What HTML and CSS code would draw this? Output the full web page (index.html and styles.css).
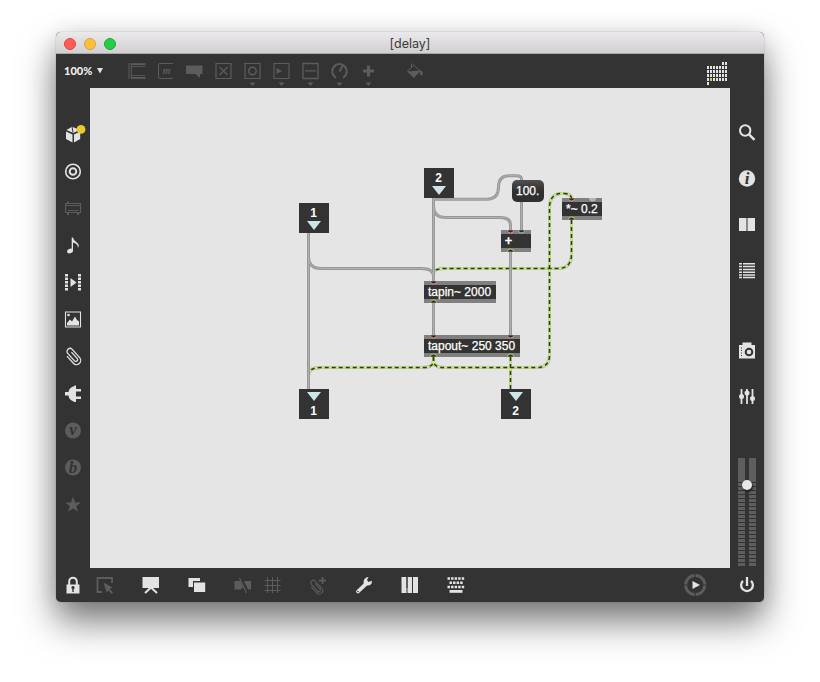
FILE: index.html
```html
<!DOCTYPE html>
<html lang="en">
<head>
<meta charset="utf-8">
<title>[delay]</title>
<link rel="stylesheet" href="styles.css">
</head>
<body>
<main class="window">
  <header class="titlebar">
    <div class="lights"><i class="light red"></i><i class="light amber"></i><i class="light green"></i></div>
    <h1>[delay]</h1>
  </header>

  <nav class="toolbar">
    <div class="zoom"><span>100%</span><svg class="caret" viewBox="0 0 6 6"><path d="M0 0H6L3 5.5Z"/></svg></div>
    <div class="tools dim">
      <svg viewBox="0 0 24 24"><path class="line" d="M4 4V20M6.300 4V20M6 5.500H20.500M6 18.500H20.500" stroke-width="1"/><path class="line" d="M7 7.500H20M7 16.500H20M6 4.500H20.500M6 19.500H20.500" stroke-width=".8"/></svg>
      <svg viewBox="0 0 24 24"><path class="line" d="M19 4.500H6Q4.500 4.500 4.500 6V18Q4.500 19.500 6 19.500H19"/><text class="msg" x="12.600" y="14.800">m</text></svg>
      <svg viewBox="0 0 24 24"><path d="M3 6.500H19.500V15H17V19L12.500 15H3Z"/></svg>
      <svg viewBox="0 0 24 24"><path class="line" d="M4 4.500H19V19.500H4ZM7.500 8L15.500 16M15.500 8L7.500 16" stroke-width="1.200"/></svg>
      <svg viewBox="0 0 24 24"><path class="line" d="M4 4.500H19V19.500H4Z" stroke-width="1.200"/><circle class="line" cx="11.500" cy="12" r="3.700" stroke-width="1.500"/><path d="M8.500 23.500H14.500L11.500 27Z"/></svg>
      <svg viewBox="0 0 24 24"><path class="line" d="M4 4.500H19V19.500H4Z" stroke-width="1.200"/><path d="M6.500 9L12 12L6.500 15ZM8.500 23.500H14.500L11.500 27Z"/></svg>
      <svg viewBox="0 0 24 24"><path class="line" d="M4 4.500H19V19.500H4ZM6 11.800H17" stroke-width="1.300"/><path d="M8.500 23.500H14.500L11.500 27Z"/></svg>
      <svg viewBox="0 0 24 24"><path class="line" d="M8 18.800A7.300 7.300 0 1 1 15 18.800M11.500 12.500L14.500 7" stroke-width="2"/><path d="M8.500 23.500H14.500L11.500 27Z"/></svg>
      <svg viewBox="0 0 24 24"><path class="line" d="M11.500 6.500V17.500M6 12H17" stroke-width="3"/><path d="M8.500 23.500H14.500L11.500 27Z"/></svg>
      <svg class="bucket" viewBox="0 0 24 24"><path class="line" d="M10 5.500L17 12L11 18L4.500 12L10.500 6.500M8.500 9V4.500"/><path d="M4.500 12.500L17 11.500L11 19ZM17 11Q20 12 19.800 15.500Q18 17.500 17 15Z"/></svg>
    </div>
    <svg class="calendar" viewBox="0 0 24 24"><path class="cells" d="M4 7.500H24M4 11.500H24M4 15.500H24M4 19.500H24"/><path class="cells" d="M19 3.500H24M4 23.500H6"/><path class="gold" d="M7 18H9V21H7Z"/></svg>
  </nav>

  <aside class="left">
    <svg viewBox="0 0 24 24"><path d="M5.500 8L11 4.800L18.500 7.700L12.500 11ZM5 9.500L11.500 12.500V20.500L5 17ZM13 12.500L19.200 9.500V17L13 20.500Z"/><path class="cut" d="M11 4.500L12 10.500"/><circle class="gold" cx="20" cy="7.400" r="4.400"/></svg>
    <svg viewBox="0 0 24 24"><circle class="line" cx="12" cy="12.500" r="7.300" stroke-width="1.600"/><circle class="line" cx="12" cy="12.500" r="3.300" stroke-width="2"/></svg>
    <svg class="dim" viewBox="0 0 24 24"><path class="line" d="M4.500 7.500H19.500V16.500H4.500ZM4 9.500H20M7 14.500H17" stroke-width="1.200"/><path d="M6 5.500H8V7H6ZM6 17H8V19H6ZM16 17H18V19H16Z"/></svg>
    <svg viewBox="0 0 24 24"><ellipse cx="9" cy="18" rx="3" ry="2.300" transform="rotate(-25 9 18)"/><path d="M10.700 4.500H12Q12.500 7.500 15.500 9.200Q19 11.500 17 15Q17 10.500 12 9.500V18H10.700Z"/></svg>
    <svg viewBox="0 0 24 24"><path d="M9.500 8L15.500 12.500L9.500 17Z"/><path class="line" d="M5.500 4V21M18.500 4V21" stroke-width="3" stroke-dasharray="2.500 1"/></svg>
    <svg viewBox="0 0 24 24"><path class="line" d="M4.500 5H19.500V20H4.500Z" stroke-width="1.100"/><path d="M6 18.500V16L9 12.500L11 14.500L14 9.500L16 13L18 14.500V18.500Z"/><circle cx="7.500" cy="8" r="1.300"/></svg>
    <svg viewBox="0 0 24 24"><g transform="translate(11.800 12.300) rotate(-42)"><path class="line" d="M1.800-4V4.500A1.800 1.800 0 0 1-1.800 4.500V-5.500A3 3 0 0 1 4.200-5.500V5.500A4.200 4.200 0 0 1-4.200 5.500V-4" stroke-width="1.300"/></g></svg>
    <svg viewBox="0 0 24 24"><path d="M4 11H7.500Q8 6.500 13.500 5V4.500H15V8H20V10.500H15V15.500H20V18H15V21H13.500Q8 19 7.500 14.500H4Z"/></svg>
    <svg class="dim" viewBox="0 0 24 24"><circle cx="12" cy="12.500" r="8"/><text class="glyph" x="12" y="17.300">v</text></svg>
    <svg class="dim" viewBox="0 0 24 24"><circle cx="12" cy="12.500" r="8"/><text class="glyph" x="12" y="18">b</text></svg>
    <svg class="dim" viewBox="0 0 24 24"><path d="M12 4.800L14 10.500H20L15.200 14L17 19.800L12 16.400L7 19.800L8.800 14L4 10.500H10Z"/></svg>
  </aside>

  <section class="canvas">
    <svg class="cables" viewBox="90 88 640 480">
      <defs>
        <g id="control">
          <path d="M308.500 233V389M308.500 233V256Q308.500 268.500 321 268.500H421Q433.500 268.500 433.500 276"/>
          <path d="M433.500 198V282M433.500 199.200H487C495 199.200 498.500 195 498.500 187C498.500 179 502 175.700 509 175.700H516Q521.500 175.700 521.500 179V231"/>
          <path d="M433.500 199V206Q433.500 217.500 446 217.500H500Q510.500 217.500 510.500 225V231M510.500 252V336M433.500 303V336"/>
        </g>
        <g id="signal">
          <path d="M433.500 357V361Q433.500 367.500 422 367.500H321Q308.500 367.500 308.500 375"/>
          <path d="M433.500 357V361Q433.500 367.500 445 367.500H537Q549.500 367.500 549.500 355V208Q549.500 193.500 562 193.500H564Q571.500 193.500 571.500 199"/>
          <path d="M571.500 220V254Q571.500 268.500 558 268.500H446Q435 268.500 434 272"/>
          <path d="M510.500 357V389"/>
        </g>
      </defs>
      <use href="#signal" class="edge"/><use href="#signal" class="lime"/><use href="#signal" class="dash"/>
      <use href="#control" class="edge"/><use href="#control" class="core"/>
    </svg>

    <div class="port in in-1"><b>1</b><i></i></div>
    <div class="port in in-2"><b>2</b><i></i></div>
    <div class="port out out-1"><i></i><b>1</b></div>
    <div class="port out out-2"><i></i><b>2</b></div>
    <div class="number">100.</div>
    <div class="object plus">+</div>
    <div class="object times">*~ 0.2</div>
    <div class="object tapin">tapin~ 2000</div>
    <div class="object tapout">tapout~ 250 350</div>

    <svg class="cables" viewBox="90 88 640 480">
      <g class="inlet hot"><path d="M507.500 230.500A3 2.500 0 0 0 513.500 230.500M568.500 198.500A3 2.500 0 0 0 574.500 198.500M430.500 281.500A3 2.500 0 0 0 436.500 281.500M430.500 335.500A3 2.500 0 0 0 436.500 335.500M507.500 335.500A3 2.500 0 0 0 513.500 335.500"/></g>
      <path class="inlet cold" d="M518.500 230.500A3 2.500 0 0 0 524.500 230.500"/>
      <path class="unused" d="M589 198A3.500 3.500 0 0 0 596 198Z"/>
      <path class="inlet outlet" d="M507.500 251.500A3 2.500 0 0 1 513.500 251.500M568.500 219.500A3 2.500 0 0 1 574.500 219.500M430.500 302.500A3 2.500 0 0 1 436.500 302.500M430.500 356.500A3 2.500 0 0 1 436.500 356.500M507.500 356.500A3 2.500 0 0 1 513.500 356.500"/>
    </svg>
  </section>

  <aside class="right">
    <svg viewBox="0 0 24 24"><circle class="line" cx="10.200" cy="10.500" r="5.200" stroke-width="2"/><path class="line" d="M14 14.300L19.500 19.800" stroke-width="2.500"/></svg>
    <svg viewBox="0 0 24 24"><circle cx="12" cy="12.500" r="8.200"/><text class="glyph" x="12" y="18.200">i</text></svg>
    <svg viewBox="0 0 24 24"><path d="M4 6H20V19H4Z"/><path class="seam" d="M12 6V19"/></svg>
    <svg viewBox="0 0 24 24"><path class="line" d="M4 5.800H20M4 8.600H20M4 11.400H20M4 14.200H20M4 17H20M4 19.600H20" stroke-width="1.500"/><path class="cut" d="M7.500 4V21"/></svg>
    <svg class="camera" viewBox="0 0 24 24"><path d="M4 7H7.500V4.500H16.500V7H20V20.500H4Z"/><circle class="hole" cx="14" cy="14" r="3.300"/><path class="cut" d="M6.500 9.500V19" stroke-width="3" stroke-dasharray="1 1.500"/></svg>
    <svg viewBox="0 0 24 24"><path class="line" d="M6.500 5V20M12 5V20M17.500 5V20" stroke-width="1.800"/><circle cx="6.500" cy="12.500" r="2.500"/><circle cx="12" cy="9" r="2.500"/><circle cx="17.500" cy="14.500" r="2.500"/></svg>
    <div class="meters"><i></i><i></i><b></b></div>
  </aside>

  <footer class="bottombar">
    <svg viewBox="0 0 24 24"><path d="M5.500 11.500H18.500V20.500H5.500Z"/><path class="line" d="M8.200 12V8.500A3.800 3.800 0 0 1 15.800 8.500V12" stroke-width="2"/><circle class="fill-bg" cx="12" cy="14.500" r="1.600"/><path class="fill-bg" d="M11.300 15H12.700V19H11.300Z"/></svg>
    <svg class="dim select" viewBox="0 0 24 24"><path class="line" d="M9 19H4.500V5H19V10" stroke-width="1.800"/><path d="M10.500 9.500L19.500 14.500L16.800 16L20 19.500L18.500 21L15.500 17.500L13.500 19.500Z"/></svg>
    <svg class="present" viewBox="0 0 24 24"><path d="M3.500 4H20V15H3.500Z"/><path class="line" d="M12 14.500L6 20M12 14.500L18 20" stroke-width="2"/></svg>
    <svg class="layers" viewBox="0 0 24 24"><path d="M3.500 5H15V8H8V14H3.500Z"/><path d="M9 9.500H20.200V19H9Z"/></svg>
    <svg class="dim snap" viewBox="0 0 24 24"><path d="M3.500 8H9L12 14L10 16.500H3.500ZM13 8H20V16.500H17Z"/><path class="line" d="M8.500 5L15.500 20" stroke-width="1.300"/></svg>
    <svg class="dim grid" viewBox="0 0 24 24"><path class="line" d="M6.500 4V20M11.500 4V20M16.500 4V20M3.500 7.500H19.500M3.500 12.500H19.500M3.500 17.500H19.500"/></svg>
    <svg class="dim clip" viewBox="0 0 24 24"><g transform="translate(10 14) rotate(-42) scale(.83)"><path class="line" d="M2-4V5A2 2 0 0 1-2 5V-6A3 3 0 0 1 4-6V6A4 4 0 0 1-4 6V-4" stroke-width="1.300"/></g><path class="line" d="M16.500 4V11M13 7.500H20" stroke-width="1.800"/></svg>
    <svg class="wrench" viewBox="0 0 24 24"><path class="line" d="M6 18.500L14 10.800" stroke-width="3.800" stroke-linecap="round"/><path d="M16.500 4L15 7L16.500 9L19.800 7.800Q20.500 13 14.500 12.500L12 11L11.500 9.500Q11.500 4.500 16.500 4Z"/><circle class="fill-bg" cx="6" cy="18.500" r=".8"/></svg>
    <svg class="piano" viewBox="0 0 24 24"><path d="M3.500 4H20V20H3.500Z"/><path class="cut" d="M9 4V20M14.500 4V20" stroke-width=".7"/><path class="cut" d="M9 4V15M14.500 4V15" stroke-width="2.200"/></svg>
    <svg class="keyboard" viewBox="0 0 24 24"><path class="line" d="M3.500 5.500H20.200M3.500 14H20.200" stroke-width="2.500" stroke-dasharray="2.500 1.050"/><path class="line" d="M5.500 9.800H18.700" stroke-width="2.500" stroke-dasharray="2.500 1.050"/><path d="M5.500 17H18.500V19.800H5.500Z"/></svg>
    <svg class="run" viewBox="0 0 24 24"><circle class="ring" cx="12.200" cy="12" r="9.600"/><path class="cut" d="M12.200 0V4.500M12.200 19.500V24M0 12H4.500M19.800 12H24.500"/><path d="M9.500 8L17 12L9.500 16Z"/></svg>
    <svg class="power" viewBox="0 0 24 24"><path class="line" d="M8 7.800A5.900 5.900 0 1 0 16 7.800M12 4V13" stroke-width="2.300"/></svg>
  </footer>
</main>
</body>
</html>
```
FILE: styles.css
```css
* { box-sizing: border-box; }
body { margin: 0; background: #fff; font-family: "Liberation Sans", Arial, sans-serif; overflow: hidden; height: 682px; }
.window {
  display: grid;
  grid-template: 22px 34px 480px 34px / 34px 640px 34px;
  width: 708px; height: 570px; margin: 32px 56px;
  border-radius: 5px;
  background: #333;
  box-shadow: 0 0 1px rgba(0,0,0,.5), 0 20px 36px rgba(0,0,0,.5), 0 4px 25px rgba(0,0,0,.12);
}
.titlebar, .toolbar, .bottombar { grid-column: 1 / -1; }
.titlebar {
  display: grid; grid-template-columns: 100px 1fr 100px; align-items: center;
  border-radius: 5px 5px 0 0;
  background: linear-gradient(#ebe9eb, #d1cfd1);
  border-bottom: 1px solid #aaa8aa;
}
.lights { display: flex; gap: 8px; padding: 1px 0 0 8px; }
.light { width: 12px; height: 12px; border-radius: 50%; border: 1px solid; }
.red { background: #ff5b57; border-color: #e2443f; }
.amber { background: #ffbf3c; border-color: #dfa032; }
.green { background: #25cc46; border-color: #1bac2c; }
h1 { margin: 0; padding-top: 2px; text-align: center; font: 400 12.5px/20px Inter, sans-serif; color: #3a3a3a; }

svg { display: block; width: 24px; height: 24px; flex: none; overflow: visible; fill: #e3e3e3; stroke: none; }
.line { fill: none; stroke: #e3e3e3; }
.dim, .dim svg { fill: #5c5c5c; }
.dim .line { stroke: #5c5c5c; }
.cut { fill: none; stroke: #333; stroke-width: 1; }
.seam { stroke: #8a8a8a; stroke-width: 2; }
.gold { fill: #e9cb2b; }
.fill-bg { fill: #333; }
.hole { fill: #e3e3e3; stroke: #333; stroke-width: 2; }
.glyph { font: italic bold 17px "Liberation Serif", serif; text-anchor: middle; fill: #333; }
.msg { font: italic bold 10px "Liberation Serif", serif; text-anchor: middle; }

.toolbar { display: flex; align-items: center; }
.zoom { display: flex; align-items: center; gap: 5px; width: 69px; padding-left: 8px; font: 900 11px/14px Lato, sans-serif; color: #eee; }
.caret { width: 6px; height: 6px; }
.tools { display: flex; gap: 5px; }
.bucket { margin-left: 17px; }
.calendar { margin: 2px 37px 0 auto; }
.cells { fill: none; stroke: #e3e3e3; stroke-width: 3; stroke-dasharray: 2 1; }

.left, .right { display: flex; flex-direction: column; align-items: center; }
.left { gap: 13px; padding-top: 34px; }
.right { gap: 22px; padding-top: 32px; }
.camera { margin-top: 34px; }
.meters { position: relative; display: flex; gap: 4px; margin-top: 28px; }
.meters i { width: 7px; height: 108px; background: linear-gradient(#5e5e5e 23px, transparent 23px), repeating-linear-gradient(#333 0 1px, #5e5e5e 1px 4px); }
.meters b { position: absolute; left: 4px; top: 22px; width: 10px; height: 10px; border-radius: 50%; background: #e8e8e8; box-shadow: 1px 2px 2px #222; }

.canvas { position: relative; background: #e5e5e5; }
.cables { position: absolute; left: 0; top: 0; width: 640px; height: 480px; fill: none; }
.edge { stroke: #989898; stroke-width: 3; }
.core { stroke: #b0b0b0; stroke-width: 1; }
.lime { stroke: #c8f27a; stroke-width: 2.400; }
.dash { stroke: #333; stroke-width: 1.500; stroke-dasharray: 4 3; }
.inlet { fill: #292929; stroke-width: 1; }
.hot { stroke: #e8907c; }
.cold { stroke: #8cd0dc; }
.outlet { stroke: #c6cf51; }
.unused { fill: #b5b5b5; }

.port { position: absolute; display: flex; flex-direction: column; align-items: center; width: 30px; height: 30px; background: #333; color: #fff; font-size: 12px; line-height: 14px; }
.port b { margin-right: 1px; }
.port i { border: 7.500px solid transparent; border-top: 9px solid #cee5e8; border-bottom: 0; }
.in { padding-top: 3px; }
.in i { margin-top: 1px; }
.out { padding-top: 3px; }
.out b { margin-top: 3px; }
.in-1 { left: 209px; top: 115px; }
.in-2 { left: 334px; top: 80px; }
.out-1 { left: 209px; top: 301px; }
.out-2 { left: 411px; top: 301px; }
.object, .number { -webkit-text-stroke: .25px #fff; }
.object { position: absolute; height: 22px; padding-left: 4px; border: solid #808080; border-width: 4px 0; background: #333; color: #fff; font-size: 12px; line-height: 14px; white-space: nowrap; }
.object.plus { left: 411px; top: 142px; width: 30px; -webkit-text-stroke: .7px #fff; }
.times { left: 472px; top: 110px; width: 40px; }
.tapin { left: 334px; top: 193px; width: 72px; }
.tapout { left: 334px; top: 247px; width: 96px; }
.number { position: absolute; left: 422px; top: 92px; width: 32px; height: 22px; border-radius: 5px; background: linear-gradient(#505050, #303030 50%); color: #fff; font-size: 12px; line-height: 22px; padding-left: 4px; }

.bottombar { display: flex; align-items: center; padding-left: 5px; }
.select { margin-left: 8px; }
.present { margin-left: 21.500px; }
.layers, .snap, .wrench, .piano, .keyboard { margin-left: 22px; }
.grid { margin-left: 6px; }
.clip { margin-left: 21px; }
.run { margin-left: auto; }
.power { margin: 0 5px 0 28px; }
.ring { fill: none; stroke: #5c5c5c; stroke-width: 3; }
```
